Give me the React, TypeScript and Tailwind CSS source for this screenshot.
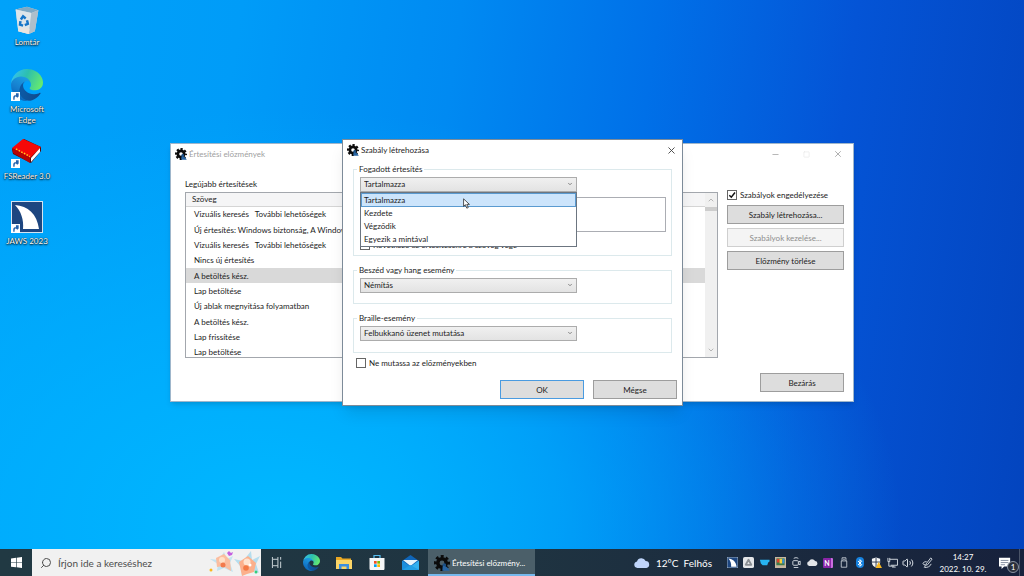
import type { ReactNode } from "react";
import { Minus, Square, X, Bluetooth, Volume2, Search, ChevronUp, ChevronDown } from "lucide-react";

const rows = [
  "Vizuális keresés   További lehetőségek",
  "Új értesítés: Windows biztonság, A Windows Defender víruskereső",
  "Vizuális keresés   További lehetőségek",
  "Nincs új értesítés",
  "A betöltés kész.",
  "Lap betöltése",
  "Új ablak megnyitása folyamatban",
  "A betöltés kész.",
  "Lap frissítése",
  "Lap betöltése",
];

const matchOptions = ["Tartalmazza", "Kezdete", "Végződik", "Egyezik a mintával"];

function GearIcon({ className }: { className: string }) {
  return (
    <svg viewBox="0 0 24 24" className={className} aria-hidden="true">
      <circle cx="12" cy="12" r="6.3" fill="none" stroke="#0b0b0b" strokeWidth="5.4" />
      <circle cx="12" cy="12" r="10" fill="none" stroke="#0b0b0b" strokeWidth="4" strokeDasharray="4.4 3.454" strokeDashoffset="2.2" />
      <circle cx="15.500" cy="15" r="2.800" fill="#1b4f85" />
      <path d="M13 17c3-2 8 1 10.500 6.500H12.500z" fill="#2765a3" />
    </svg>
  );
}

function EdgeIcon({ className }: { className: string }) {
  return (
    <svg viewBox="0 0 256 256" className={className} aria-hidden="true">
      <defs>
        <linearGradient id="edgeNavy" x1="0.2" y1="0.5" x2="1" y2="0.6">
          <stop offset="0" stopColor="#0c59a4" />
          <stop offset="1" stopColor="#114a8b" />
        </linearGradient>
        <linearGradient id="edgeBlue" x1="0.7" y1="0.1" x2="0.3" y2="1">
          <stop offset="0" stopColor="#1b9de2" />
          <stop offset="0.5" stopColor="#1680cf" />
          <stop offset="1" stopColor="#0860b4" />
        </linearGradient>
        <linearGradient id="edgeGreen" x1="0" y1="0.3" x2="1" y2="0.6">
          <stop offset="0" stopColor="#35c1f1" />
          <stop offset="0.45" stopColor="#2dbfae" />
          <stop offset="1" stopColor="#66eb6e" />
        </linearGradient>
      </defs>
      <path fill="url(#edgeNavy)" d="M231 190.5c-3.4 1.8-6.9 3.4-10.5 4.7a101.8 101.8 0 0 1-35.9 6.5c-47.3 0-88.5-32.5-88.5-74.3a31.5 31.5 0 0 1 16.4-27.3c-42.8 1.8-53.8 46.4-53.8 72.5 0 73.9 68.1 81.4 82.8 81.4 7.9 0 19.8-2.3 27-4.6l1.3-.4a128.3 128.3 0 0 0 66.6-52.8 4 4 0 0 0-5.4-5.7z" />
      <path fill="url(#edgeBlue)" d="M105.7 241.4a79.2 79.2 0 0 1-22.7-21.3 80.7 80.7 0 0 1 29.5-120c3.2-1.5 8.5-4.1 15.6-4a32.4 32.4 0 0 1 25.7 13 31.9 31.9 0 0 1 6.3 18.7c0-.2 24.5-79.6-80-79.6-43.9 0-80 41.6-80 78.2a130.2 130.2 0 0 0 12.1 56 128 128 0 0 0 156.4 67 75.5 75.5 0 0 1-62.8-8z" />
      <path fill="url(#edgeGreen)" d="M152.3 148.9c-.9 1-3.4 2.5-3.4 5.6 0 2.6 1.7 5.2 4.8 7.3 14.3 10 41.4 8.6 41.5 8.6a59.6 59.6 0 0 0 30.3-8.3 61.4 61.4 0 0 0 30.4-52.9c.3-22.4-8-37.3-11.3-43.9C223.5 23.9 177.7 0 128 0A128 128 0 0 0 0 126.2c.5-36.5 36.8-66 80-66 3.5 0 23.5.3 42 10 16.3 8.6 24.9 19 30.8 29.2 6.2 10.7 7.3 24.1 7.3 29.5s-2.7 13.3-7.8 19.9z" />
    </svg>
  );
}

function RecycleBinIcon() {
  return (
    <svg viewBox="0 0 32 34" className="h-[30px] w-7" aria-hidden="true">
      <path d="M3 6 16 3l13 4-4 24-7 3-12-3z" fill="#c9d9e4" />
      <path d="M3 6 16 3l13 4-8 3z" fill="#7fa9c4" />
      <path d="M3 6l18 4-3 24-12-3z" fill="#dde5ea" />
      <path d="M21 10l8-3-4 24-7 3z" fill="#aebfcb" />
      <path d="M6 26l13 2-1 6-12-3z" fill="#e9e4df" />
      <g fill="none" stroke="#1575c8" strokeWidth="2.8">
        <path d="M9 17.500l2.500-3.500 3 2.500" />
        <path d="M16 18.500l1 4-3.500 1.500" />
        <path d="M11.500 24.500l-3.500-1 .5-4" />
      </g>
    </svg>
  );
}

function BookIcon() {
  return (
    <svg viewBox="0 0 32 30" className="h-[30px] w-8" aria-hidden="true">
      <path d="M13 1 30 9v4L20 25 2 16l-1-5z" fill="#5a0606" />
      <path d="M12 1 30 9 19 20 1 10z" fill="#f50808" />
      <path d="M1 10l18 10v5L2 15z" fill="#b50505" />
      <path d="M29 10v4L20 24v-4z" fill="#fff" />
      <path d="M5 11l14 7.500" stroke="#ffd21f" strokeWidth="1.500" strokeDasharray="1.500 1.500" />
    </svg>
  );
}

function JawsIcon({ className }: { className: string }) {
  return (
    <svg viewBox="0 0 32 32" className={className} aria-hidden="true">
      <rect x="0.500" y="0.500" width="31" height="31" fill="#1d4680" stroke="#d6e4f0" />
      <path d="M4 4c13 1 22 9 24 24H12C13 19 10 10 4 4z" fill="#fff" />
    </svg>
  );
}

function DesktopIcon({ label, shortcut, className, children }: { label: string; shortcut?: boolean; className: string; children: ReactNode }) {
  return (
    <button className={`flex w-[54px] flex-col items-center px-[3px] ${className}`}>
      <span className="relative">
        {children}
        {shortcut && (
          <svg viewBox="0 0 10 10" className="absolute bottom-0 left-0 size-[9px]" aria-hidden="true">
            <rect width="10" height="10" fill="#fff" />
            <path d="M2.500 8.500V6c0-2 1-2.500 3-2.500V1.500h3V5L7 6.500 5.500 5C4.500 5 4 5.500 4 8.500z" fill="#2463ae" />
          </svg>
        )}
      </span>
      <span className="mt-[3px] leading-[11px] text-white [text-shadow:0_1px_2px_#000,0_0_1px_#000]">{label}</span>
    </button>
  );
}

function PushButton({ children, className = "border-[#9d9d9d]", disabled }: { children: ReactNode; className?: string; disabled?: boolean }) {
  return (
    <button
      disabled={disabled}
      className={`h-[19px] border bg-[#dddddd] leading-[10px] disabled:border-[#cfcfcf] disabled:bg-[#f4f4f4] disabled:text-[#8d8d8d] ${className}`}
    >
      {children}
    </button>
  );
}

function CheckBox({ defaultChecked }: { defaultChecked?: boolean }) {
  return (
    <span className="relative size-[10px] shrink-0">
      <input type="checkbox" defaultChecked={defaultChecked} className="peer block size-[10px] appearance-none border border-[#666] bg-white" />
      <svg viewBox="0 0 10 10" className="pointer-events-none absolute inset-0 hidden size-[10px] peer-checked:block" aria-hidden="true">
        <path d="M2.300 5.200l2 2L8 2.500" fill="none" stroke="#111" strokeWidth="1.500" />
      </svg>
    </span>
  );
}

function ComboBox({ label, options }: { label: string; options: string[] }) {
  return (
    <div className="relative w-[217px]">
      <select
        aria-label={label}
        className="block h-[15px] w-full appearance-none border border-[#acacac] bg-linear-to-b from-[#f0f0f0] to-[#e3e3e3] px-[3px] leading-[13px]"
      >
        {options.map((option) => (
          <option key={option}>{option}</option>
        ))}
      </select>
      <ChevronDown className="pointer-events-none absolute top-1 right-1 size-[6px] text-[#666]" strokeWidth={3} />
    </div>
  );
}

function GroupBox({ legend, className, children }: { legend: string; className?: string; children: ReactNode }) {
  return (
    <fieldset className={`relative min-w-0 border border-[#dce9ec] px-[6px] pt-[3px] ${className}`}>
      <legend className="-ml-[3px] px-[2px] leading-[10px]">{legend}</legend>
      {children}
    </fieldset>
  );
}

function HistoryWindow() {
  return (
    <section className="absolute top-[143px] left-[170px] flex h-[259px] w-[684px] flex-col border border-[#9fb6cb] bg-white shadow-md">
      <header className="flex h-5 items-center pl-1 text-[#a0a0a0]">
        <GearIcon className="mr-[2px] size-3" />
        <h1 className="flex-1">Értesítési előzmények</h1>
        <button aria-label="Kis méret" className="flex w-[31px] justify-center">
          <Minus className="size-[9px]" strokeWidth={2} />
        </button>
        <button aria-label="Teljes méret" disabled className="flex w-[31px] justify-center text-[#e6e6e6]">
          <Square className="size-[7px]" strokeWidth={2} />
        </button>
        <button aria-label="Ablak bezárása" className="flex w-[31px] justify-center">
          <X className="size-[10px]" strokeWidth={2} />
        </button>
      </header>
      <div className="flex gap-[9px] pt-[15px] pr-[9px] pl-[14px]">
        <div className="min-w-0 flex-1">
          <h2 className="leading-[10px]">Legújabb értesítések</h2>
          <div className="mt-[3px] flex h-[166px] overflow-hidden border border-[#a3a7ad]">
            <table className="h-[167px] flex-1 table-fixed text-left">
              <thead>
                <tr className="h-[13px] border-b border-[#d5d5d5] bg-[#f5f5f6]">
                  <th className="px-[6px] py-0 font-normal leading-[12px]">Szöveg</th>
                </tr>
              </thead>
              <tbody>
                {rows.map((row, i) => (
                  <tr key={i} className={i === 4 ? "bg-[#d9d9d9]" : ""}>
                    <td className="truncate py-0 pr-0 pl-2 leading-[12px] whitespace-pre">{row}</td>
                  </tr>
                ))}
              </tbody>
            </table>
            <div className="flex w-3 flex-col items-center bg-[#f0f0f0]">
              <ChevronUp className="h-[14px] w-2 text-[#999]" />
              <div className="h-1 w-full bg-[#cdcdcd]" />
              <ChevronDown className="mt-auto h-[14px] w-2 text-[#999]" />
            </div>
          </div>
        </div>
        <div className="flex w-[117px] flex-col gap-1 pt-[11px]">
          <label className="mb-px flex h-[10px] items-center gap-[3px] whitespace-nowrap">
            <CheckBox defaultChecked />
            Szabályok engedélyezése
          </label>
          <PushButton>Szabály létrehozása...</PushButton>
          <PushButton disabled>Szabályok kezelése...</PushButton>
          <PushButton>Előzmény törlése</PushButton>
        </div>
      </div>
      <footer className="mt-auto flex justify-end pr-[9px] pb-[9px]">
        <PushButton className="w-[84px] border-[#9d9d9d]">Bezárás</PushButton>
      </footer>
    </section>
  );
}

function RuleDialog() {
  return (
    <section role="dialog" aria-labelledby="rule-title" className="absolute top-[139px] left-[342px] flex h-[267px] w-[341px] flex-col border border-[#7d8b99] bg-white shadow-lg">
      <header className="flex h-5 items-center pl-1">
        <GearIcon className="mr-[2px] size-3" />
        <h1 id="rule-title" className="flex-1">Szabály létrehozása</h1>
        <button aria-label="Párbeszédpanel bezárása" className="flex w-[21px] justify-center">
          <X className="size-[11px] text-[#444]" strokeWidth={2} />
        </button>
      </header>
      <div className="flex flex-1 flex-col gap-[9px] pt-1 pr-[10px] pl-[10px]">
        <GroupBox legend="Fogadott értesítés" className="h-[92px]">
          <ComboBox label="Fogadott értesítés" options={matchOptions} />
          <textarea aria-label="Értesítés szövege" className="mt-[5px] block h-[35px] w-[306px] resize-none border border-[#abadb3]" />
          <label className="mt-2 flex h-[10px] items-center gap-[3px]">
            <CheckBox />
            Következő az értesítésekre a szöveg vége
          </label>
          <ul role="listbox" aria-label="Feltételek" className="absolute top-[18px] left-[6px] w-[217px] border border-[#6c7580] bg-white">
            {matchOptions.map((option, i) => (
              <li
                key={option}
                role="option"
                aria-selected={i === 0}
                className="h-[13px] border border-transparent px-[2px] leading-[11px] aria-selected:h-[14px] aria-selected:border-[#5a9ad0] aria-selected:bg-[#cce4fb] aria-selected:leading-[12px]"
              >
                {option}
              </li>
            ))}
          </ul>
        </GroupBox>
        <GroupBox legend="Beszéd vagy hang esemény" className="h-[39px]">
          <ComboBox label="Beszéd vagy hang esemény" options={["Némítás"]} />
        </GroupBox>
        <GroupBox legend="Braille-esemény" className="h-10">
          <ComboBox label="Braille-esemény" options={["Felbukkanó üzenet mutatása"]} />
        </GroupBox>
        <label className="-mt-1 ml-[3px] flex h-[10px] items-center gap-[3px]">
          <CheckBox />
          Ne mutassa az előzményekben
        </label>
      </div>
      <footer className="flex justify-end gap-[9px] pr-[5px] pb-[6px]">
        <PushButton className="w-[84px] border-[#4a9be0]">OK</PushButton>
        <PushButton className="w-[84px] border-[#9d9d9d]">Mégse</PushButton>
      </footer>
    </section>
  );
}

function SearchArt() {
  return (
    <svg viewBox="0 0 52 26" className="h-[26px] w-[52px]" aria-hidden="true">
      <path d="M1 9l9 1 5-8 3 7 6-3-3 7 3 9-9-4-7 3 1-7z" fill="#c3e3f0" />
      <path d="M25 9l9 2 8-10 1 9 8-4-4 8 3 9-9-4-8 7-1-9z" fill="#b5ddee" />
      <path d="M7 8l8-4 6 6 1 11-8-5-6 1z" fill="#fbbd9f" />
      <path d="M30 12l9-6 8 7-2 9-7 2-5 2z" fill="#fcb08c" />
      <circle cx="13" cy="10" r="3" fill="#ffe0c7" />
      <circle cx="14" cy="15" r="2.500" fill="#f27a4c" />
      <circle cx="38" cy="12" r="3.500" fill="#ffe3cf" />
      <circle cx="37" cy="18" r="2.800" fill="#f47a45" />
      <circle cx="41" cy="15" r="1.500" fill="#fff" />
      <path d="M20 1l2 2 2-1-1 3-3 1-2-3z" fill="#c35ee0" />
      <circle cx="2" cy="20" r="1.500" fill="#fbb81c" />
      <circle cx="47" cy="22" r="1.500" fill="#32cf7c" />
    </svg>
  );
}

function CloudIcon({ className, color }: { className: string; color: string }) {
  return (
    <svg viewBox="0 0 24 15" className={className} aria-hidden="true">
      <path d="M5 15a5 5 0 0 1-.5-9.900A7 7 0 0 1 17.500 4.500 5.300 5.300 0 0 1 18.500 15z" fill={color} />
    </svg>
  );
}

function TrayButton({ label, children }: { label: string; children: ReactNode }) {
  return (
    <button aria-label={label} className="flex w-4 items-center justify-center last:ml-[3px]">
      {children}
    </button>
  );
}

function TrayIcons() {
  return (
    <div className="flex text-[#d9dfe6]">
      <TrayButton label="JAWS"><JawsIcon className="size-[11px]" /></TrayButton>
      <TrayButton label="Google Drive">
        <svg viewBox="0 0 12 12" className="size-[11px]">
          <rect width="12" height="12" rx="2" fill="#e4e6e8" />
          <path d="M6 3 3 8.500h6z" fill="none" stroke="#8a8f93" strokeWidth="2" strokeLinejoin="round" />
        </svg>
      </TrayButton>
      <TrayButton label="Csésze">
        <svg viewBox="0 0 12 12" className="size-[11px]"><path d="M1 3h10.500v2L10 6 9 9H4L2 7z" fill="#27b4f2" /></svg>
      </TrayButton>
      <TrayButton label="Színek">
        <svg viewBox="0 0 12 12" className="size-[11px]">
          <rect width="12" height="12" fill="#c7b79f" />
          <rect x="1.500" y="1.500" width="9" height="7.500" fill="#3e7a4a" />
          <path d="M2 2h3v4H2z" fill="#d94130" /><path d="M5 2h3v5H5z" fill="#f5ce37" /><path d="M8 2h2v5H8z" fill="#318edb" />
        </svg>
      </TrayButton>
      <TrayButton label="Meet Now">
        <svg viewBox="0 0 12 12" className="size-[11px]" fill="none" stroke="currentColor">
          <rect x="2" y="4" width="6" height="5" rx="1" /><path d="M8 5.500l2-1v4l-2-1M3 1.500c2-1 3-1 5 0M3 11.500h5" />
        </svg>
      </TrayButton>
      <TrayButton label="OneDrive"><CloudIcon className="w-[11px]" color="#e2e5e8" /></TrayButton>
      <TrayButton label="OneNote">
        <span className="flex size-[10px] items-center justify-center rounded-[1px] border-r-2 border-[#c86edf] bg-[#8a25a8] text-[7px] leading-[8px] font-bold text-white">N</span>
      </TrayButton>
      <TrayButton label="USB">
        <svg viewBox="0 0 10 14" className="h-[11px] w-[8px]" fill="none" stroke="currentColor">
          <path d="M2.500 5V1h5v4M1.500 5h7v8h-7zM4 3h2" />
        </svg>
      </TrayButton>
      <TrayButton label="Bluetooth">
        <span className="flex h-[11px] w-[8px] items-center justify-center rounded-full bg-[#1682df]"><Bluetooth className="size-[8px] text-white" strokeWidth={3} /></span>
      </TrayButton>
      <TrayButton label="Windows biztonság">
        <svg viewBox="0 0 12 12" className="size-[11px]">
          <path d="M1 2l4.500-1.500L10 2v4c0 3-2 4.500-4.500 5.500C3 10.500 1 9 1 6z" fill="#f3f4f5" />
          <path d="M5.500 1v10M1 5.500h9" stroke="#28334a" />
          <path d="M8.500 5.500l3.500 6.500H5z" fill="#f6b622" />
        </svg>
      </TrayButton>
      <TrayButton label="Hálózat">
        <svg viewBox="0 0 12 12" className="size-[11px]" fill="none" stroke="currentColor">
          <path d="M3 2.500h8.500V9H4M1 1v4h2V1M2 5v5h6M5.500 11h4" />
        </svg>
      </TrayButton>
      <TrayButton label="Hangerő"><Volume2 className="size-3" strokeWidth={2} /></TrayButton>
      <TrayButton label="Toll">
        <svg viewBox="0 0 12 12" className="size-[11px]" fill="none" stroke="currentColor">
          <path d="M4.500 7.500l5-6.500L11 2.300 6 8.500l-2 .5zM5 5C1 5 0 8 2 8s2 3 0 3.500M3 11.500c3 0 6-1 7-4" />
        </svg>
      </TrayButton>
    </div>
  );
}

function Taskbar() {
  return (
    <footer className="flex h-[27px] items-stretch bg-linear-to-r from-[#213943] via-[#1f3441] to-[#17213c] text-white">
      <button aria-label="Start" className="flex w-8 items-center justify-center">
        <svg viewBox="0 0 12 12" className="size-[11px]" fill="#fff">
          <path d="M0 1.600 5.500.8v4.900H0zM6.200.7 12 0v5.700H6.200zM0 6.400h5.500v4.900L0 10.500zM6.200 6.400H12V12l-5.800-.7z" />
        </svg>
      </button>
      <label className="flex w-[229px] items-center bg-[#f1f1f1] pl-2 text-[#4d4d4d]">
        <Search className="size-3 -scale-x-100" strokeWidth={2} />
        <input type="text" aria-label="Keresés" placeholder="Írjon ide a kereséshez" className="min-w-0 flex-1 pl-[6px] text-[10px] leading-[14px] placeholder:text-[#4d4d4d]" />
        <SearchArt />
      </label>
      <button aria-label="Feladatnézet" className="flex w-8 items-center justify-center">
        <svg viewBox="0 0 13 12" className="h-[11px] w-3" fill="none" stroke="#d7dfe3">
          <path d="M1.500 0v2.500h6V0M1.500 12V9.500h6V12M1.500 2.500v7M7.500 2.500v7M10.500 0v3M10.500 5v7" />
        </svg>
      </button>
      <button aria-label="Microsoft Edge" className="flex w-[34px] items-center justify-center pl-[2px]">
        <EdgeIcon className="size-[17px]" />
      </button>
      <button aria-label="Fájlkezelő" className="flex w-[33px] items-center justify-center">
        <svg viewBox="0 0 16 14" className="h-[14px] w-4">
          <path d="M0 1h5l1.500 1.500H15V13H0z" fill="#e9a824" />
          <path d="M0 4h16v9H0z" fill="#fbd567" />
          <path d="M3 13V8h10v5h-2.500v-2.500h-5V13z" fill="#3d8fe0" />
        </svg>
      </button>
      <button aria-label="Microsoft Store" className="flex w-[33px] items-center justify-center">
        <svg viewBox="0 0 16 17" className="h-[17px] w-4">
          <path d="M5 4V1.500h6V4" fill="none" stroke="#55bdf0" strokeWidth="1.200" />
          <path d="M.5 4h15v10.500c0 1-.5 1.500-1.500 1.500H2c-1 0-1.500-.5-1.500-1.500z" fill="#f5f7f8" />
          <path d="M5 7h2.700v2.700H5z" fill="#f25022" /><path d="M8.300 7H11v2.700H8.300z" fill="#7fba00" />
          <path d="M5 10.300h2.700V13H5z" fill="#00a4ef" /><path d="M8.300 10.300H11V13H8.300z" fill="#ffb900" />
        </svg>
      </button>
      <button aria-label="Posta" className="flex w-[35px] items-center justify-center">
        <svg viewBox="0 0 17 15" className="h-[15px] w-[17px]">
          <path d="M0 6l8.500-6L17 6v9H0z" fill="#0f65b8" />
          <path d="M1 5h15L8.500 11z" fill="#e8f4fb" />
          <path d="M0 5.500l8.500 6L0 15z" fill="#1c8fdd" /><path d="M17 5.500l-8.500 6L17 15z" fill="#33b0ef" />
          <path d="M0 15l8.500-5 8.500 5z" fill="#229fe6" />
        </svg>
      </button>
      <button className="flex w-[107px] items-center gap-[2px] border-b-2 border-[#76b9ed] bg-[#4b5f69] pt-[2px] pl-[6px] leading-[12px] whitespace-nowrap">
        <GearIcon className="size-4 shrink-0" />
        Értesítési előzmény...
      </button>
      <button className="ml-auto flex items-center gap-[6px] text-[10px] leading-[12px] whitespace-pre">
        <CloudIcon className="w-4" color="#bfd5fb" />
        12°C  Felhős
      </button>
      <div className="flex pl-3">
        <TrayIcons />
      </div>
      <button className="w-[56px] text-center leading-3">
        14:27
        <br />
        2022. 10. 29.
      </button>
      <button aria-label="Értesítések" className="relative flex w-[28px] items-center justify-center">
        <svg viewBox="0 0 14 14" className="size-3">
          <path d="M0 1h13v10H6l-3 3v-3H0z" fill="#fff" />
          <path d="M2 4h9M2 6.500h9M2 9h5" stroke="#54617a" strokeWidth="0.800" />
        </svg>
        <span className="absolute top-[12px] left-4 flex size-3 items-center justify-center rounded-full border border-[#8b94a3] bg-[#2b303c] leading-[10px]">1</span>
      </button>
      <div className="w-[5px] border-l border-[#4a5468]" />
    </footer>
  );
}

export default function App() {
  return (
    <div className="flex h-screen flex-col overflow-hidden font-[Lato,'Open_Sans',sans-serif] text-[8px] text-[#1c1c1c]">
      <main className="relative flex-1 bg-[radial-gradient(ellipse_60%_75%_at_28%_95%,#00b8ff_0%,#00b4ffaa_45%,transparent_100%),linear-gradient(98deg,#00a2fa_0%,#009cf8_22%,#008af2_42%,#0070e8_60%,#0454d6_78%,#0344be_100%)]">
        <nav className="flex flex-col">
          <DesktopIcon label="Lomtár" className="h-[66px] pt-1">
            <RecycleBinIcon />
          </DesktopIcon>
          <DesktopIcon label="Microsoft Edge" shortcut className="h-[70px] pt-[3px]">
            <EdgeIcon className="size-8" />
          </DesktopIcon>
          <DesktopIcon label="FSReader 3.0" shortcut className="h-[63px] pt-[2px]">
            <BookIcon />
          </DesktopIcon>
          <DesktopIcon label="JAWS 2023" shortcut className="pt-[2px]">
            <JawsIcon className="size-8" />
          </DesktopIcon>
        </nav>
        <HistoryWindow />
        <RuleDialog />
        <svg viewBox="0 0 12 18" className="pointer-events-none absolute top-[198px] left-[463px] h-[11px] w-[7px]" aria-hidden="true">
          <path d="M1 1v13l3-3 2.500 6 2.500-1-2.500-5.500H11z" fill="#fff" stroke="#222" strokeWidth="1.300" />
        </svg>
      </main>
      <Taskbar />
    </div>
  );
}
